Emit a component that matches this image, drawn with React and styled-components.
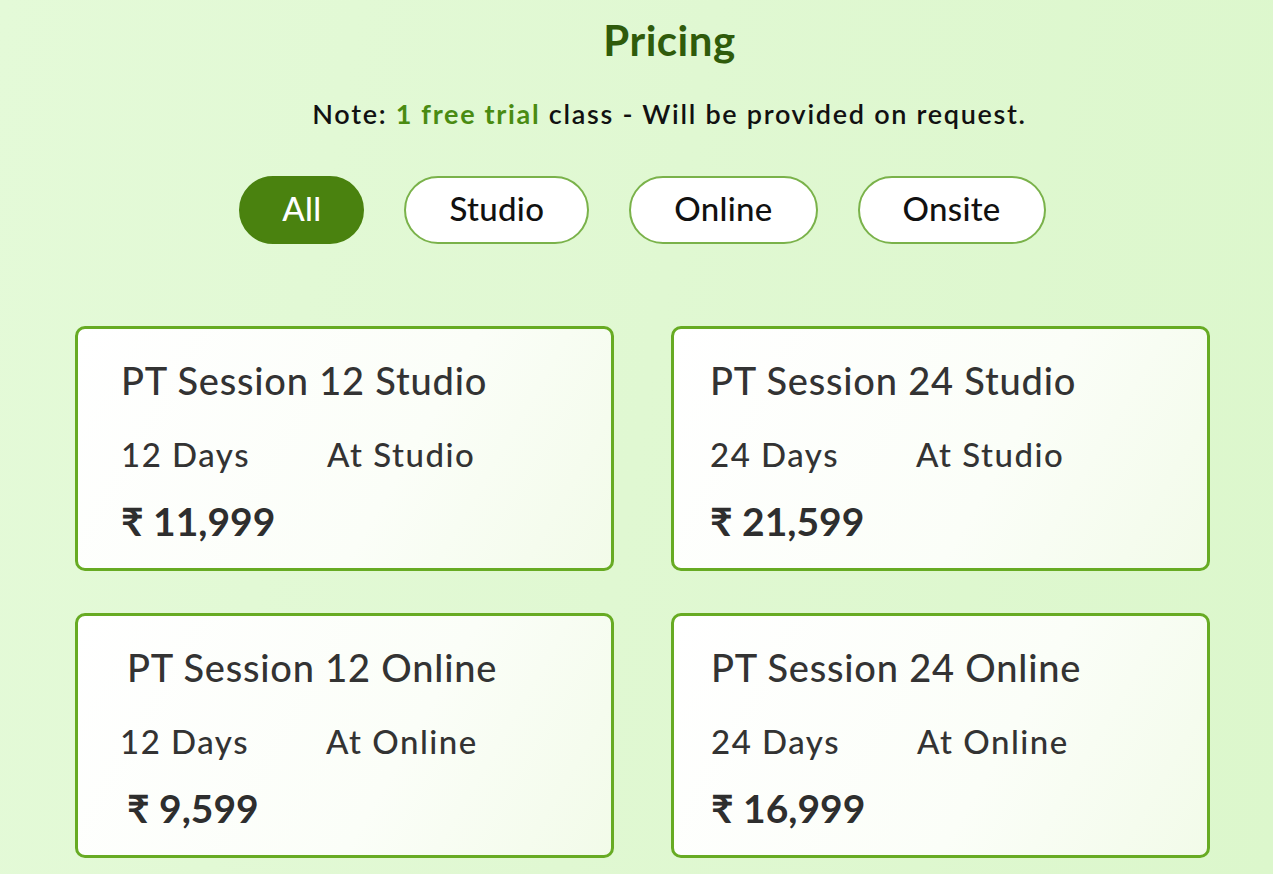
import React, { useState } from "react";
import styled, { createGlobalStyle } from "styled-components";

const Global = createGlobalStyle`
  html, body { margin: 0; padding: 0; }
  body {
    font-family: "Lato", "Noto Sans", sans-serif;
    background: linear-gradient(100deg, #e4fad8 0%, #e0f8d2 50%, #dcf7cc 100%);
    min-height: 874px;
  }
`;

const Page = styled.div`
  width: 1273px;
  height: 874px;
  overflow: hidden;
  display: flex;
  flex-direction: column;
  align-items: stretch;
`;

const Title = styled.h1`
  margin: 16px 0 0 0;
  padding-left: 66px;
  text-align: center;
  font-size: 42px;
  line-height: 48px;
  font-weight: 700;
  letter-spacing: 0.5px;
  color: #2f5b0b;
`;

const Note = styled.p`
  margin: 34px 0 0 0;
  padding-left: 66px;
  text-align: center;
  font-size: 27px;
  line-height: 32px;
  font-weight: 600;
  letter-spacing: 1.7px;
  color: #111;
`;

const Accent = styled.span`
  color: #4a8b12;
  font-weight: 700;
`;

const Filters = styled.div`
  margin-top: 46px;
  display: flex;
  justify-content: center;
  gap: 40px;
  padding-left: 12px;
`;

const Pill = styled.button`
  height: 68px;
  padding: 0 ${(p) => (p.$active ? "41px" : "43px")} 4px;
  border-radius: 34px;
  border: 2px solid ${(p) => (p.$active ? "#4a820f" : "#7ab24a")};
  background: ${(p) => (p.$active ? "#4a820f" : "#ffffff")};
  color: ${(p) => (p.$active ? "#ffffff" : "#111")};
  font-family: inherit;
  font-size: 33px;
  font-weight: 500;
  letter-spacing: 0.3px;
  cursor: pointer;
`;

const Grid = styled.div`
  margin-top: 82px;
  padding-left: 75px;
  display: grid;
  grid-template-columns: 539px 539px;
  column-gap: 57px;
  row-gap: 42px;
`;

const Card = styled.div`
  box-sizing: border-box;
  height: 245px;
  border: 3px solid #67ab23;
  border-radius: 10px;
  background: linear-gradient(120deg, #ffffff 0%, #fbfef8 60%, #f2fbe9 100%);
  padding: 29px 0 0 ${(p) => p.$pad}px;
  color: #333;
`;

const CardTitle = styled.div`
  padding-left: ${(p) => p.$shift}px;
  font-size: 38px;
  line-height: 44px;
  font-weight: 500;
  letter-spacing: 0.8px;
`;

const Details = styled.div`
  margin-top: 33px;
  display: flex;
  font-size: 33px;
  line-height: 38px;
  font-weight: 500;
  letter-spacing: 1.5px;
`;

const Days = styled.span`
  width: 206px;
`;

const Price = styled.div`
  margin-top: 26px;
  padding-left: ${(p) => p.$shift}px;
  font-size: 39px;
  line-height: 44px;
  font-weight: 700;
  color: #2e2e2e;
`;

const plans = [
  { title: "PT Session 12 Studio", days: "12 Days", at: "At Studio", price: "₹ 11,999", pad: 43, shift: 0, type: "Studio" },
  { title: "PT Session 24 Studio", days: "24 Days", at: "At Studio", price: "₹ 21,599", pad: 36, shift: 0, type: "Studio" },
  { title: "PT Session 12 Online", days: "12 Days", at: "At Online", price: "₹ 9,599", pad: 42, shift: 7, type: "Online" },
  { title: "PT Session 24 Online", days: "24 Days", at: "At Online", price: "₹ 16,999", pad: 37, shift: 0, type: "Online" },
];

export default function App() {
  const [filter, setFilter] = useState("All");
  const shown = plans.filter((p) => filter === "All" || p.type === filter);
  return (
    <Page>
      <Global />
      <Title>Pricing</Title>
      <Note>
        Note: <Accent>1 free trial</Accent> class - Will be provided on request.
      </Note>
      <Filters>
        {["All", "Studio", "Online", "Onsite"].map((f) => (
          <Pill key={f} $active={filter === f} onClick={() => setFilter(f)}>
            {f}
          </Pill>
        ))}
      </Filters>
      <Grid>
        {shown.map((p) => (
          <Card key={p.title} $pad={p.pad}>
            <CardTitle $shift={p.shift}>{p.title}</CardTitle>
            <Details>
              <Days>{p.days}</Days>
              <span>{p.at}</span>
            </Details>
            <Price $shift={p.shift}>{p.price}</Price>
          </Card>
        ))}
      </Grid>
    </Page>
  );
}
